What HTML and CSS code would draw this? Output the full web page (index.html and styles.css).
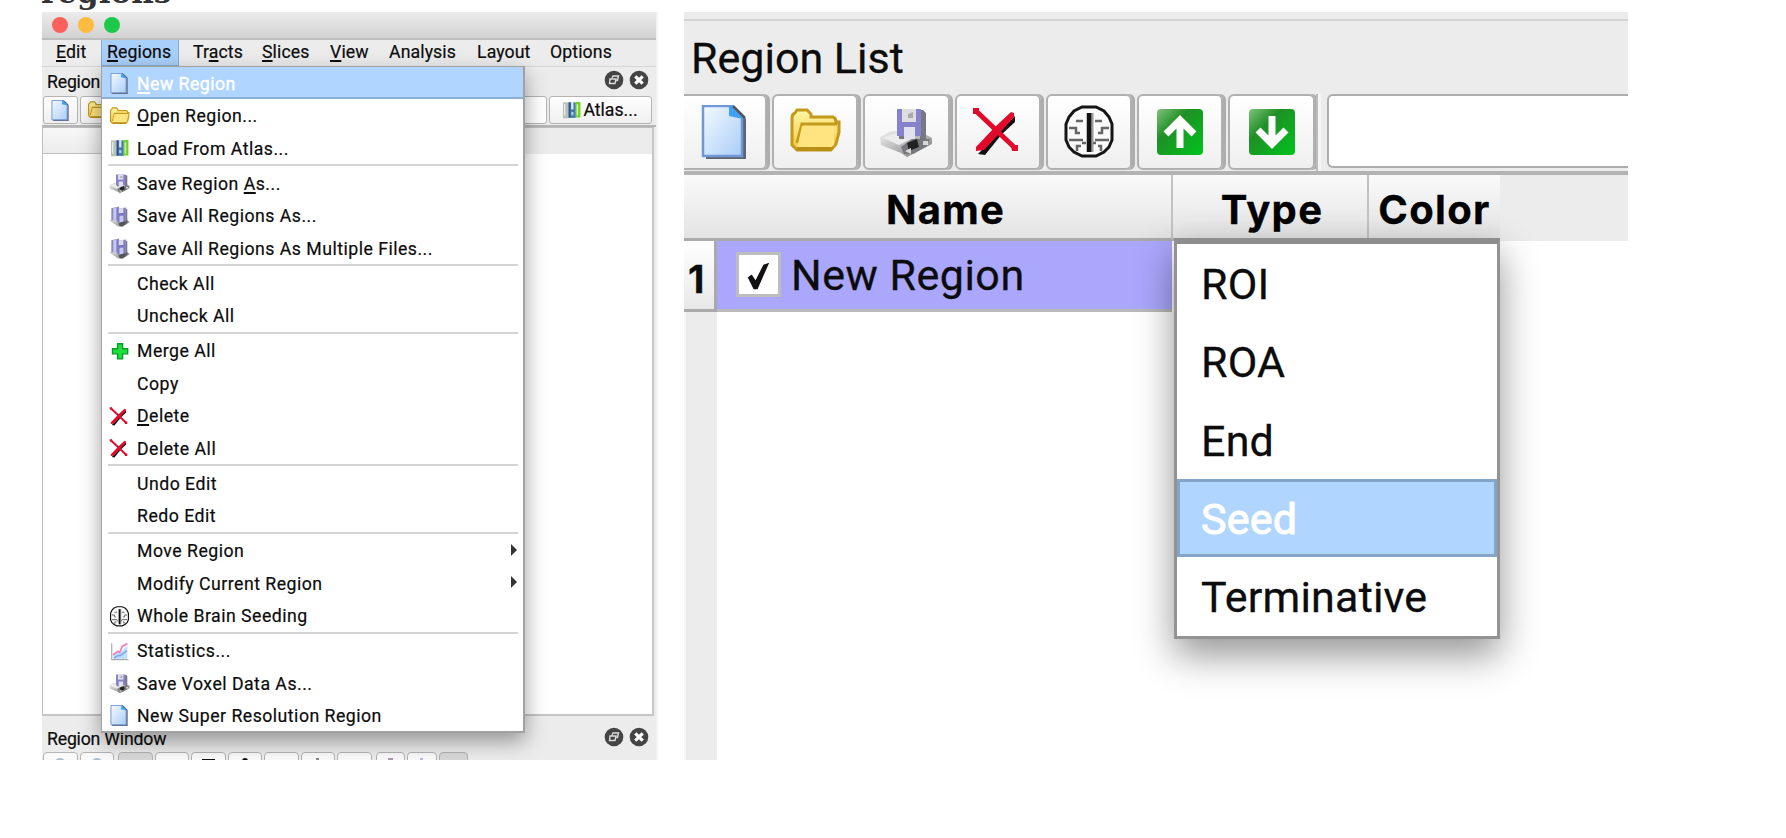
FILE: index.html
```html
<!DOCTYPE html>
<html lang="en">
<head>
<meta charset="utf-8">
<title>Regions</title>
<link rel="stylesheet" href="styles.css">
</head>
<body>
<svg class="defs" width="0" height="0" aria-hidden="true">
  <defs>
    <linearGradient id="paper" x1="0" y1="0" x2="1" y2="1"><stop offset="0" stop-color="#f4faff"/><stop offset="1" stop-color="#a9cdf8"/></linearGradient>
    <linearGradient id="gold" x1="0" y1="0" x2="0" y2="1"><stop offset="0" stop-color="#fff6a8"/><stop offset="1" stop-color="#f5c93c"/></linearGradient>
    <linearGradient id="green" x1="0" y1="0" x2="1" y2="1"><stop offset="0" stop-color="#7fc27a"/><stop offset=".35" stop-color="#1f8f26"/><stop offset="1" stop-color="#00c41c"/></linearGradient>
    <linearGradient id="metal" x1="0" y1="0" x2="1" y2="1"><stop offset="0" stop-color="#f2f2f2"/><stop offset="1" stop-color="#777"/></linearGradient>
    <symbol id="doc" viewBox="0 0 54 54">
      <path d="M8 3H38L48 14V54H8Z" fill="#5f6470"/>
      <path d="M5 1H34L44 11V51H5Z" fill="url(#paper)" stroke="#6f98d8" stroke-width="2.500"/>
      <path d="M31 1V11L45 14V11L34 1Z" fill="#3fa0f5"/><path d="M35 1L47 13" stroke="#555" stroke-width="2.500"/>
    </symbol>
    <symbol id="folder" viewBox="0 0 54 54">
      <path d="M4 13Q4 9 7 8L9 5H19L23 9V12H45Q48 13 48 17H51V27L48 39L43 45H9L4 40Z" fill="url(#gold)" stroke="#c49a1c" stroke-width="3"/>
      <path d="M9 38L14 19H49" fill="none" stroke="#c49a1c" stroke-width="3"/>
      <path d="M14 21H46V40L42 43H9Z" fill="#ffe480"/><path d="M9 42H44L43 46H9Z" fill="#b98f18"/>
    </symbol>
    <symbol id="disk" viewBox="0 0 54 54">
      <path d="M1 32L12 26H40L53 33V39L34 49L28 52L22 48L2 40Z" fill="url(#metal)"/>
      <path d="M4 33L16 28L32 34L20 40Z" fill="#ececec"/>
      <path d="M22 42L33 34L51 34L48 41L34 49H25Z" fill="#77787c"/><path d="M28 38L38 34L40 42L30 46Z" fill="#222"/>
      <path d="M26 46L32 43V49ZM44 36H49V40H44Z" fill="#d9d9d9"/>
      <path d="M24 5H44L47 8V34H41V30H27V34H20V5Z" fill="#777884"/>
      <path d="M18 4H42V31H18Z" fill="#8782cc"/>
      <path d="M23 4H37V17H23Z" fill="#dedee2"/><path d="M25 22H36V34H25Z" fill="#e2e1ee"/>
      <path d="M29 9L34 7V13H29Z" fill="#aaa"/>
    </symbol>
    <symbol id="disks" viewBox="0 0 54 54">
      <path d="M1 38L12 30H42L53 42L36 53H24Z" fill="url(#metal)"/>
      <path d="M24 45L36 38L50 40L36 52H28Z" fill="#55565c"/>
      <path d="M6 6L26 1V34L6 37Z" fill="#8b87cc"/><path d="M11 6L19 4V35L11 36Z" fill="#c9c9e8"/>
      <path d="M20 7L43 4V39L24 43L20 38Z" fill="#7d7ac4"/><path d="M25 6L37 5V18H25Z" fill="#dadaea"/><path d="M27 25H37V40L27 42Z" fill="#c8c7e8"/>
      <path d="M43 6L47 9V39L43 40Z" fill="#777"/>
    </symbol>
    <symbol id="cross" viewBox="0 0 54 54">
      <path d="M7 49L44 11V17L31 29L14 50Z" fill="#111"/>
      <path d="M4 5L44 43" fill="none" stroke="#e10a2b" stroke-width="5"/>
      <path d="M40 7L24 22L5 42V46L13 45L26 31L43 12V8Z" fill="#e10a2b"/><path d="M40 40H47V46H41ZM2 3H8V9H2Z" fill="#e10a2b"/>
    </symbol>
    <symbol id="brain" viewBox="0 0 54 54">
      <path d="M20 2H34L42 6L47 12L50 19V35L47 42L42 47L34 51H20L12 47L7 42L4 35V19L7 12L12 6Z" fill="#fafafa" stroke="#151515" stroke-width="3"/>
      <path d="M30 8V47" stroke="#999" stroke-width="3"/><path d="M27 8V47" stroke="#111" stroke-width="4.500"/>
      <path d="M14 16H21M33 16H40M7 23H14V28H18M47 23H40V28H36M7 35H21M47 35H33M20 38H24M34 38H31M15 46V41H19M39 46V41H36" fill="none" stroke="#666" stroke-width="2.500"/>
    </symbol>
    <symbol id="up" viewBox="0 0 54 54">
      <rect x="4" y="4" width="46" height="46" rx="4" fill="url(#green)"/>
      <path d="M27 43V14M13 29L27 15L41 29" fill="none" stroke="#fff" stroke-width="7"/>
    </symbol>
    <symbol id="down" viewBox="0 0 54 54">
      <rect x="4" y="4" width="46" height="46" rx="4" fill="url(#green)"/>
      <path d="M27 11V39M13 25L27 39L41 25" fill="none" stroke="#fff" stroke-width="7"/>
    </symbol>
    <symbol id="plus" viewBox="0 0 54 54">
      <path d="M22 7H35V20H48V33H35V46H22V33H9V20H22Z" fill="#1be03c" stroke="#0b9a22" stroke-width="3.500"/>
    </symbol>
    <symbol id="atlas" viewBox="0 0 54 54">
      <path d="M5 6H19V47H5Z" fill="#b9c0ba"/><path d="M8 10H11V40H8Z" fill="#eef2ee"/>
      <path d="M19 6H38V46H19Z" fill="#4a78a8"/><path d="M26 5H32V24H26Z" fill="#d6e8f4"/><path d="M26 31H32V39H26Z" fill="#a9cdf0"/><path d="M20 6H24V45H20Z" fill="#2b4f85"/>
      <path d="M38 5H50V45H38Z" fill="#74d02c"/><path d="M40 11H44V40H40Z" fill="#c8f59a"/>
    </symbol>
    <symbol id="chart" viewBox="0 0 54 54">
      <path d="M12 46V36L22 29L30 31L38 20L47 12V46Z" fill="#bfe0ff"/>
      <path d="M12 44L22 38L30 37L46 25" fill="none" stroke="#7fa8f5" stroke-width="4"/>
      <path d="M10 36L22 27L28 29L34 14L47 7" fill="none" stroke="#f084b8" stroke-width="5"/>
      <path d="M7 6V48H50" fill="none" stroke="#aaa" stroke-width="3"/>
    </symbol>
    <symbol id="float" viewBox="0 0 20 20">
      <circle cx="10" cy="10" r="9.300" fill="#444"/>
      <path d="M8 8L9 6H14.500L13.500 10.500H12.500M6 9H12L11 13.500H5.500Z" fill="none" stroke="#ddd" stroke-width="1.400"/>
    </symbol>
    <symbol id="close" viewBox="0 0 20 20">
      <circle cx="10" cy="10" r="9.300" fill="#444"/>
      <path d="M6.300 6.300L13.700 13.700M13.700 6.300L6.300 13.700" stroke="#fff" stroke-width="3.200"/>
    </symbol>
  </defs>
</svg>

<h2 class="heading">regions</h2>

<main class="figures">
  <section class="window">
    <div class="titlebar"><i class="light red"></i><i class="light amber"></i><i class="light lime"></i></div>
    <nav class="menubar">
      <span class="m-edit"><u>E</u>dit</span>
      <span class="m-regions open"><u>R</u>egions</span>
      <span class="m-tracts">Tr<u>a</u>cts</span>
      <span class="m-slices"><u>S</u>lices</span>
      <span class="m-view"><u>V</u>iew</span>
      <span class="m-analysis">Analysis</span>
      <span class="m-layout">Layout</span>
      <span class="m-options">Options</span>
    </nav>
    <div class="dock-title">
      <span>Region List</span>
      <svg class="round"><use href="#float"/></svg><svg class="round"><use href="#close"/></svg>
    </div>
    <div class="small-tools">
      <div class="small-btn"><svg class="ico"><use href="#doc"/></svg></div>
      <div class="small-btn"><svg class="ico"><use href="#folder"/></svg></div>
      <div class="small-input"></div>
      <div class="atlas-btn"><svg class="ico"><use href="#atlas"/></svg><span>Atlas...</span></div>
    </div>
    <div class="list">
      <div class="list-head"><div class="list-head-cell"></div></div>
    </div>
    <div class="dock-title lower">
      <span>Region Window</span>
      <svg class="round"><use href="#float"/></svg><svg class="round"><use href="#close"/></svg>
    </div>
    <div class="strip">
      <i class="tab"><b class="lens"></b></i><i class="tab"><b class="lens"></b></i>
      <i class="tab dark group"></i><i class="tab"></i><i class="tab"><b class="bar"></b></i><i class="tab"><b class="dot"></b></i><i class="tab"></i><i class="tab"><b class="tick"></b></i><i class="tab"></i>
      <i class="tab slim group"><b class="violet"></b></i><i class="tab slim"><b class="pale"></b></i><i class="tab slim dark"></i>
    </div>

    <div class="menu">
      <div class="item hot"><svg class="ico"><use href="#doc"/></svg><span><u>N</u>ew Region</span></div>
      <div class="item"><svg class="ico"><use href="#folder"/></svg><span><u>O</u>pen Region...</span></div>
      <div class="item"><svg class="ico"><use href="#atlas"/></svg><span>Load From Atlas...</span></div>
      <hr>
      <div class="item"><svg class="ico"><use href="#disk"/></svg><span>Save Region <u>A</u>s...</span></div>
      <div class="item"><svg class="ico"><use href="#disks"/></svg><span>Save All Regions As...</span></div>
      <div class="item"><svg class="ico"><use href="#disks"/></svg><span>Save All Regions As Multiple Files...</span></div>
      <hr>
      <div class="item"><i class="ico"></i><span>Check All</span></div>
      <div class="item"><i class="ico"></i><span>Uncheck All</span></div>
      <hr>
      <div class="item"><svg class="ico"><use href="#plus"/></svg><span>Merge All</span></div>
      <div class="item"><i class="ico"></i><span>Copy</span></div>
      <div class="item"><svg class="ico"><use href="#cross"/></svg><span><u>D</u>elete</span></div>
      <div class="item"><svg class="ico"><use href="#cross"/></svg><span>Delete All</span></div>
      <hr>
      <div class="item"><i class="ico"></i><span>Undo Edit</span></div>
      <div class="item"><i class="ico"></i><span>Redo Edit</span></div>
      <hr>
      <div class="item"><i class="ico"></i><span>Move Region</span><i class="arrow"></i></div>
      <div class="item"><i class="ico"></i><span>Modify Current Region</span><i class="arrow"></i></div>
      <div class="item"><svg class="ico"><use href="#brain"/></svg><span>Whole Brain Seeding</span></div>
      <hr>
      <div class="item"><svg class="ico"><use href="#chart"/></svg><span>Statistics...</span></div>
      <div class="item"><svg class="ico"><use href="#disk"/></svg><span>Save Voxel Data As...</span></div>
      <div class="item"><svg class="ico"><use href="#doc"/></svg><span>New Super Resolution Region</span></div>
    </div>
  </section>

  <section class="panel">
    <div class="panel-title"><span>Region List</span></div>
    <div class="tools">
      <div class="btn first"><svg><use href="#doc"/></svg></div>
      <div class="btn"><svg><use href="#folder"/></svg></div>
      <div class="btn"><svg><use href="#disk"/></svg></div>
      <div class="btn"><svg><use href="#cross"/></svg></div>
      <div class="btn"><svg><use href="#brain"/></svg></div>
      <div class="btn"><svg><use href="#up"/></svg></div>
      <div class="btn"><svg><use href="#down"/></svg></div>
      <div class="divider"></div>
      <div class="field"></div>
    </div>
    <div class="head">
      <div class="c-name">Name</div><div class="c-type">Type</div><div class="c-color">Color</div>
    </div>
    <div class="row">
      <div class="num">1</div>
      <div class="cell">
        <div class="check"><svg viewBox="0 0 40 40"><path d="M9 23L13 20L17 26L25 10L31 8L19 35H15Z" fill="#111"/></svg></div>
        <span>New Region</span>
      </div>
    </div>
    <div class="rest"></div>
    <div class="combo">
      <div class="opt">ROI</div>
      <div class="opt">ROA</div>
      <div class="opt">End</div>
      <div class="opt sel">Seed</div>
      <div class="opt">Terminative</div>
    </div>
  </section>
</main>
</body>
</html>
```

FILE: styles.css
```css
* { box-sizing: border-box; }
body { margin: 0; width: 1786px; height: 838px; overflow: hidden; background: #fff; color: #0c0c0c; font-family: Roboto, Inter, "Liberation Sans", sans-serif; }
.defs { position: absolute; }
.heading { margin: 0 0 0 41px; height: 12px; overflow: hidden; display: flex; align-items: flex-end; font: 600 31px/40px "DejaVu Serif", serif; color: #333; }
.figures { display: flex; gap: 26px; padding-left: 42px; }

/* left window */
.window { position: relative; width: 616px; height: 748px; background: #ececec; border-right: 2px solid #f4f4f4; overflow: hidden; display: flex; flex-direction: column; font-size: 17.700px; -webkit-text-stroke: .2px; }
.window u { text-decoration-thickness: 1.500px; text-underline-offset: 2px; }
.titlebar { height: 28px; flex: none; background: linear-gradient(#ececec, #d2d2d2); border-bottom: 2px solid #bdbdbd; display: flex; align-items: center; gap: 10px; padding-left: 10px; }
.light { width: 16px; height: 16px; border-radius: 50%; }
.red { background: #fc605b; } .amber { background: #fdbc40; } .lime { background: #1dc94b; }
.menubar { height: 27px; flex: none; display: flex; border-bottom: 1px solid #d6d6d6; line-height: 24px; white-space: nowrap; letter-spacing: .1px; }
.menubar span { flex: none; }
.m-edit { width: 59px; padding-left: 14px; }
.m-regions { width: 78px; padding-left: 6px; }
.open { background: #a9d0fa; border: 1px solid #83acd9; border-top: 0; padding-left: 5px; }
.m-tracts { width: 83px; padding-left: 14px; }
.m-slices { width: 68px; }
.m-view { width: 59px; }
.m-analysis { width: 88px; }
.m-layout { width: 73px; }
.dock-title { height: 29px; flex: none; display: flex; align-items: center; gap: 5px; padding: 0 7px 0 5px; letter-spacing: -.2px; }
.dock-title span { flex: 1; }
.round { width: 20px; height: 20px; flex: none; margin-top: -3px; }
.small-tools { height: 31px; flex: none; display: flex; gap: 2px; border-bottom: 2px solid #b5b5b5; padding: 0 4px 1px 1px; }
.small-btn, .atlas-btn { border: 1px solid #b4b4b4; border-radius: 3px; background: linear-gradient(#fff, #efefef); display: flex; align-items: center; justify-content: center; }
.small-btn { width: 35px; }
.small-input { flex: 1; background: #fff; border: 1px solid #b4b4b4; border-radius: 3px; }
.atlas-btn { width: 103px; gap: 1px; line-height: 29px; padding-right: 2px; }
.ico { width: 21px; height: 21px; flex: none; display: block; }
.list { width: 612px; flex: 1; background: #fff; border: 1px solid #bdbdbd; border-right: 2px solid #c6c6c6; border-bottom: 2px solid #c6c6c6; }
.list-head { height: 26px; background: #ececec; display: flex; }
.list-head-cell { width: 300px; background: linear-gradient(#f8f8f8, #ebebeb); border-bottom: 1px solid #c0c0c0; }
.lower { height: 36px; padding-top: 9px; }
.strip { height: 8px; flex: none; display: flex; gap: 2px; overflow: hidden; padding-left: 1px; }
.tab { width: 34.500px; height: 20px; flex: none; background: #fafafa; border: 1px solid #b4b4b4; border-radius: 4px; display: flex; justify-content: center; padding-top: 5px; }
.dark { background: #d8d8d8; }
.group { margin-left: 2px; }
.slim { width: 29.500px; }
.lens { width: 12px; height: 12px; border-radius: 50%; background: #a9bdc9; }
.bar { width: 13px; height: 3px; background: #111; margin-top: 1px; }
.dot { width: 6px; height: 6px; border-radius: 3px; background: #111; }
.tick { width: 3px; height: 4px; background: #888; }
.violet { width: 5px; height: 4px; background: #a9a; }
.pale { width: 3px; height: 4px; background: #bbd; }

.menu { position: absolute; left: 59px; top: 54px; width: 424px; height: 667px; background: #fff; border: 1px solid #a2a2a2; border-right-width: 2px; border-bottom-width: 2px; box-shadow: 0 8px 20px rgba(0,0,0,.38); letter-spacing: .480px; }
.menu hr { height: 2px; margin: 0 5px .670px 6px; border: 0; background: #d4d4d4; }
.item { height: 32.450px; display: flex; align-items: center; gap: 7px; padding: 1px 6px 0 7px; white-space: nowrap; }
.item span { flex: 1; }
.hot { padding-top: 3px; background: #b0d5fe; color: #fff; border-bottom: 2px solid #8bb0d8; -webkit-text-stroke: .4px; }
.arrow { border: 6px solid transparent; border-left-color: #333; border-right: 0; margin-top: -3px; }

/* right panel */
.panel { position: relative; width: 944px; height: 748px; background: #fff; display: flex; flex-direction: column; font-size: 43px; -webkit-text-stroke: .3px; }
.panel-title { height: 82px; flex: none; background: #ececec; padding: 7px 0 0 7px; }
.panel-title::before { content: ""; display: block; height: 2px; margin-left: -7px; background: #d4d4d4; }
.panel-title span { display: block; padding-top: 8px; line-height: 58px; }
.tools { height: 81px; flex: none; display: flex; gap: 5px; background: #ececec; border-bottom: 4px solid #b3b3b3; }
.btn { width: 86.300px; height: 76px; flex: none; border: 2px solid #b0b0b0; border-radius: 6px; background: linear-gradient(#fff, #efefef); box-shadow: 3px 0 #adadad; display: flex; align-items: center; justify-content: center; }
.btn.first { width: 83px; border-left: 0; border-radius: 0 6px 6px 0; padding-right: 0; }
.btn svg { width: 54px; height: 54px; }
.divider { width: 5px; margin: 0 1px 0 -4px; border-left: 2px solid #bbb; background: #f5f5f5; }
.field { flex: 1; height: 74px; background: #fff; border: 2px solid #adadad; border-right: 0; border-radius: 6px 0 0 6px; }
.head { height: 66px; flex: none; display: flex; background: #ececec; font: 700 40px/69px Inter, sans-serif; letter-spacing: 1.300px; color: #000; }
.head div { background: linear-gradient(#fafafa, #e3e3e3); border-bottom: 3px solid #aaa; text-align: center; }
.c-name { width: 489px; border-right: 2px solid #c2c2c2; padding-left: 36px; }
.c-type { width: 196px; border-right: 2px solid #c2c2c2; padding-left: 4px; }
.c-color { width: 131px; }
.row { height: 71px; width: 488px; flex: none; display: flex; }
.num { width: 33px; border-right: 3px solid #aaa; border-bottom: 3px solid #aaa; background: linear-gradient(#fff, #e8e8e8); font: 700 38px/76px Inter, sans-serif; padding-left: 4px; }
.cell { flex: 1; background: #aaa7fd; border-bottom: 3px solid #b9b9b9; display: flex; align-items: center; gap: 10px; padding-left: 19px; letter-spacing: .5px; }
.check { width: 45px; height: 45px; margin-top: -1px; background: #fff; border: 3px solid #bdbdbd; }
.check svg { display: block; width: 39px; height: 39px; }
.rest { flex: 1; width: 33px; background: #ececec; border-left: 2px solid #f6f6f6; }
.combo { position: absolute; left: 490px; top: 226px; width: 326px; height: 401px; background: #fff; border: 3px solid #939393; border-top: 6px solid #8e8e8e; box-shadow: 0 16px 36px rgba(0,0,0,.42); letter-spacing: .2px; }
.opt { height: 78.300px; padding-left: 24px; line-height: 80px; border: 0 solid #85a5c8; }
.sel { background: #b0d5fe; color: #fff; border-width: 3px; padding-left: 21px; line-height: 74px; -webkit-text-stroke: 1px; }
```
